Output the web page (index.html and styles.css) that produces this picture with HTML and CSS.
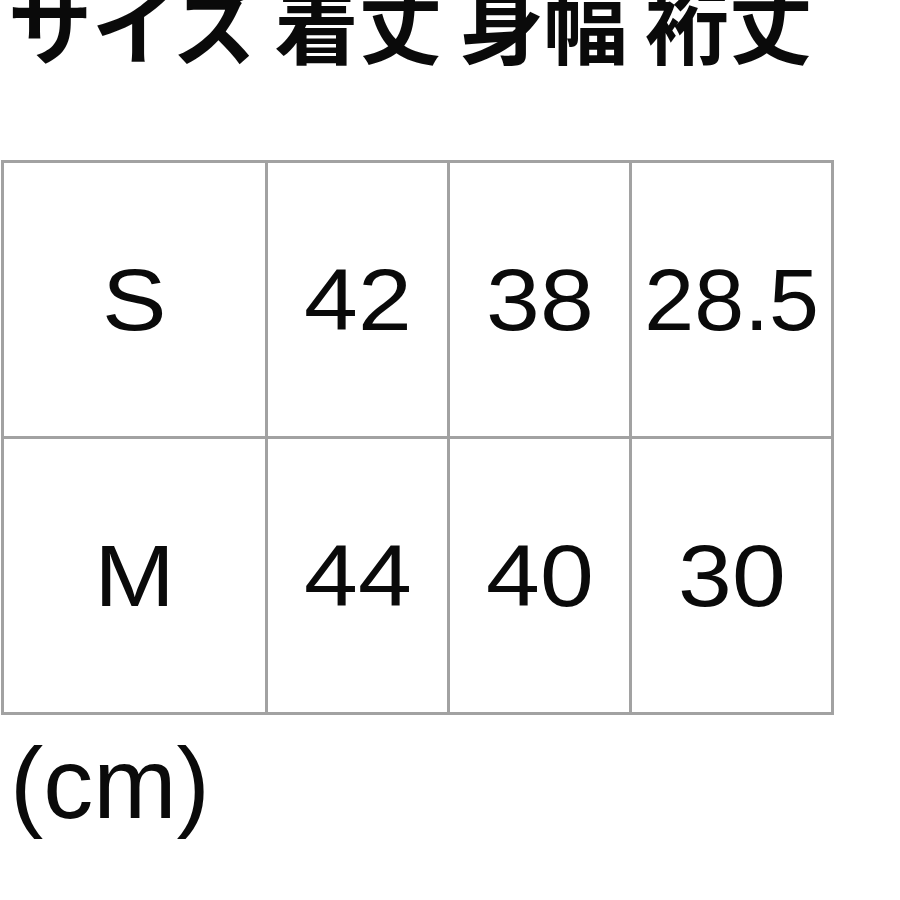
FILE: index.html
```html
<!DOCTYPE html>
<html lang="ja">
<head>
<meta charset="utf-8">
<title>サイズ</title>
<link rel="stylesheet" href="styles.css">
</head>
<body>
<h1 class="title">サイズ 着丈 身幅 裄丈</h1>
<table class="size-table">
  <colgroup>
    <col class="c1"><col class="c2"><col class="c3"><col class="c4">
  </colgroup>
  <tbody>
    <tr><td><span class="v">S</span></td><td><span class="v">42</span></td><td><span class="v">38</span></td><td><span class="v tight">28.5</span></td></tr>
    <tr><td><span class="v">M</span></td><td><span class="v">44</span></td><td><span class="v">40</span></td><td><span class="v">30</span></td></tr>
  </tbody>
</table>
<p class="unit">(cm)</p>
</body>
</html>
```

FILE: styles.css
```css
html, body {
  margin: 0;
  padding: 0;
  background: #fff;
  color: #0a0a0a;
  overflow: hidden;
}
body {
  width: 900px;
  height: 900px;
}
.title {
  margin: -20px 0 0 0;
  padding-left: 8px;
  font-family: "Noto Sans CJK JP", "Liberation Sans", sans-serif;
  font-weight: 700;
  font-size: 84px;
  line-height: 84px;
  word-spacing: -2px;
  white-space: nowrap;
}
.size-table {
  margin: 96px 0 0 1px;
  border-collapse: collapse;
  table-layout: fixed;
  width: 830px;
}
.size-table .c1 { width: 264px; }
.size-table .c2 { width: 182px; }
.size-table .c3 { width: 182px; }
.size-table .c4 { width: 202px; }
.size-table td {
  border: 3px solid #a2a2a2;
  height: 273px;
  padding: 0;
  text-align: center;
  vertical-align: middle;
  font-family: "Liberation Sans", Arial, sans-serif;
  font-size: 88px;
  line-height: 1;
}
.size-table .v {
  display: inline-block;
  transform: scaleX(1.1);
}
.size-table .v.tight {
  transform: scaleX(1.02);
}
.unit {
  margin: 11px 0 0 0;
  padding-left: 10px;
  font-family: "Liberation Sans", Arial, sans-serif;
  font-size: 100px;
  line-height: 1.15;
}
```
